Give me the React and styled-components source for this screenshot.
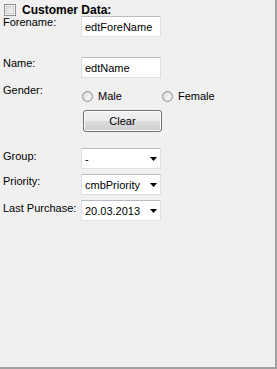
import React from "react";
import styled, { createGlobalStyle } from "styled-components";

const Global = createGlobalStyle`
  html, body { margin: 0; padding: 0; background: #f0f0f0; }
  body { font-family: "Liberation Sans", Arial, sans-serif; font-size: 11px; color: #000; }
  * { box-sizing: border-box; }
`;

const Panel = styled.div`
  width: 277px;
  height: 369px;
  background: #f0f0f0;
  border-right: 2px solid #a0a0a0;
  border-bottom: 2px solid #a0a0a0;
  display: flex;
  flex-direction: column;
`;

const Header = styled.label`
  display: flex;
  align-items: center;
  height: 16px;
  padding: 3px 0 0 4px;
  gap: 6px;
  font-weight: bold;
  font-size: 12px;
`;

const CheckBox = styled.span`
  width: 12px;
  height: 12px;
  border: 1px solid #8f8f8f;
  background: linear-gradient(135deg, #dcdcdc 0%, #f4f4f4 100%);
  box-shadow: inset 0 0 0 1px #f4f4f4, inset 0 0 0 2px #d0d0d0;
`;

const Row = styled.div`
  display: grid;
  grid-template-columns: 78px 80px;
  padding-left: 3px;
  margin-top: ${(p) => p.$gap || 0}px;
  height: ${(p) => p.$h || 21}px;
`;

const Label = styled.div`
  padding-top: ${(p) => p.$pt || 0}px;
  line-height: 13px;
  white-space: nowrap;
`;

const TextBox = styled.div`
  height: 21px;
  width: 80px;
  background: #fff;
  border: 1px solid #dde1e7;
  border-top-color: #b9bdc3;
  display: flex;
  align-items: center;
  padding-left: 3px;
`;

const Combo = styled(TextBox)`
  justify-content: space-between;
  padding-right: 3px;
`;

const Arrow = styled.svg`
  width: 7px;
  height: 4px;
  margin-top: 1px;
`;

const Radios = styled.div`
  display: grid;
  grid-template-columns: 80px 80px;
  padding-top: 6px;
  margin-left: 1px;
`;

const RadioItem = styled.div`
  display: flex;
  align-items: center;
  gap: 5px;
  height: 12px;
`;

const RadioDot = styled.span`
  width: 11px;
  height: 11px;
  border-radius: 50%;
  border: 1px solid #8e8f8f;
  background: radial-gradient(circle at 60% 60%, #f8f8f8 0%, #e4e4e4 55%, #cfcfcf 100%);
  flex: none;
`;

const Button = styled.div`
  width: 79px;
  height: 22px;
  margin-left: 2px;
  border: 1px solid #707070;
  border-radius: 3px;
  background: linear-gradient(#f2f2f2 0%, #ebebeb 50%, #dddddd 50%, #cfcfcf 100%);
  box-shadow: inset 0 0 0 1px #fcfcfc;
  display: flex;
  align-items: center;
  justify-content: center;
`;

const Spacer = styled.div``;

const DownArrow = () => (
  <Arrow viewBox="0 0 7 4">
    <path d="M0 0H7L3.5 4Z" fill="#000" />
  </Arrow>
);

export default function App() {
  return (
    <>
      <Global />
      <Panel>
        <Header>
          <CheckBox />
          Customer Data:
        </Header>
        <Row>
          <Label>Forename:</Label>
          <TextBox>edtForeName</TextBox>
        </Row>
        <Row $gap={20}>
          <Label>Name:</Label>
          <TextBox>edtName</TextBox>
        </Row>
        <Row $gap={6} $h={20}>
          <Label>Gender:</Label>
          <Radios>
            <RadioItem>
              <RadioDot />
              Male
            </RadioItem>
            <RadioItem>
              <RadioDot />
              Female
            </RadioItem>
          </Radios>
        </Row>
        <Row $gap={6} $h={22}>
          <Spacer />
          <Button>Clear</Button>
        </Row>
        <Row $gap={16}>
          <Label $pt={2}>Group:</Label>
          <Combo>
            <span>-</span>
            <DownArrow />
          </Combo>
        </Row>
        <Row $gap={5}>
          <Label $pt={1}>Priority:</Label>
          <Combo>
            <span>cmbPriority</span>
            <DownArrow />
          </Combo>
        </Row>
        <Row $gap={5}>
          <Label $pt={2}>Last Purchase:</Label>
          <Combo>
            <span>20.03.2013</span>
            <DownArrow />
          </Combo>
        </Row>
      </Panel>
    </>
  );
}
